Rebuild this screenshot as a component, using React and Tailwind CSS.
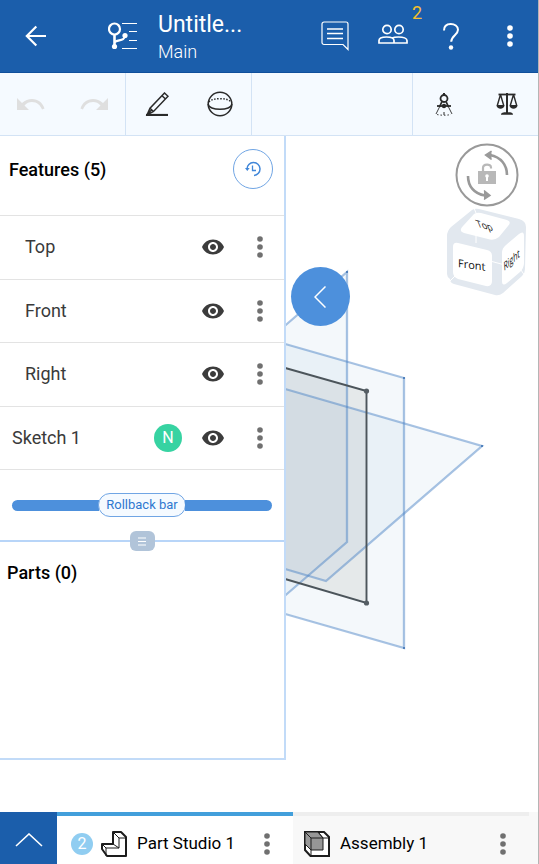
import React from "react";

function Dots({ className }) {
  return (
    <svg viewBox="0 0 8 24" className={className} fill="currentColor" aria-hidden="true">
      <circle cx="4" cy="4" r="2.8" />
      <circle cx="4" cy="12" r="2.8" />
      <circle cx="4" cy="20" r="2.8" />
    </svg>
  );
}

function Eye() {
  return (
    <svg viewBox="0 0 24 24" className="size-6" fill="#3c3c3c" aria-hidden="true">
      <path d="M12 4.500C7 4.500 2.730 7.610 1 12c1.730 4.390 6 7.500 11 7.500s9.270-3.110 11-7.500c-1.730-4.390-6-7.500-11-7.500zM12 17c-2.760 0-5-2.240-5-5s2.240-5 5-5 5 2.240 5 5-2.240 5-5 5zm0-8c-1.660 0-3 1.340-3 3s1.340 3 3 3 3-1.340 3-3-1.340-3-3-3z" />
    </svg>
  );
}

function Header() {
  return (
    <header className="flex h-[73px] shrink-0 border-b border-[#0f4f9b] bg-[#1b5eab] text-white">
      <button aria-label="Back" className="flex w-[72px] items-center justify-center">
        <svg viewBox="0 0 24 24" className="size-6" fill="none" stroke="currentColor" strokeWidth="2.200" aria-hidden="true">
          <path d="M22 12H3.500M12.300 2.400 2.800 12l9.500 9.600" />
        </svg>
      </button>
      <div className="flex min-w-0 flex-1 items-center gap-5 pl-9">
        <svg viewBox="0 0 30 28" className="h-7 w-[30px] shrink-0" fill="none" stroke="currentColor" aria-hidden="true">
          <circle cx="6.500" cy="7" r="5.500" strokeWidth="2.200" />
          <path d="M6.500 12.500v12" strokeWidth="2.600" />
          <path d="M6.500 20c4.500-2.500 10-1 10.500-6.500" strokeWidth="2.200" />
          <circle cx="6.500" cy="24.500" r="2.600" fill="currentColor" stroke="none" />
          <circle cx="17" cy="13.500" r="2.600" fill="currentColor" stroke="none" />
          <path d="M14 1.500h15M21 9.500h8M21 18.500h8M14 26.500h15" strokeWidth="1.200" />
        </svg>
        <div className="min-w-0 pt-1">
          <h1 className="text-[23px] leading-7 whitespace-nowrap">Untitle...</h1>
          <p className="text-lg leading-[26px] font-light">Main</p>
        </div>
      </div>
      <div className="flex shrink-0">
        <button aria-label="Comments" className="flex w-[58px] items-center justify-center">
          <svg viewBox="0 0 28 30" className="h-[30px] w-7" fill="none" stroke="currentColor" strokeWidth="1.200" aria-hidden="true">
            <path d="M3 1h22a2 2 0 0 1 2 2v25.500l-5-5H3a2 2 0 0 1-2-2V3a2 2 0 0 1 2-2z" />
            <path d="M6 8h16M6 12.500h16M6 17.500h16" strokeWidth="1.500" />
          </svg>
        </button>
        <button aria-label="Share, 2 collaborators" className="relative flex w-[58px] items-center justify-center">
          <svg viewBox="0 0 30 20" className="mb-1 h-5 w-[30px]" fill="none" stroke="currentColor" strokeWidth="1.700" aria-hidden="true">
            <circle cx="9" cy="5.500" r="4.200" />
            <circle cx="21" cy="5.500" r="4.200" />
            <path d="M1 19v-2.500C1 14.500 4 13 8.500 13s7.500 1.500 7.500 3.500V19zM14 14c1.500-.7 4-1 6.500-1 5 0 8.500 1.500 8.500 3.500V19H16" />
          </svg>
          <span className="absolute top-px right-0 text-lg leading-6 text-[#f7c02c]">2</span>
        </button>
        <button aria-label="Help" className="flex w-[58px] items-center justify-center">
          <svg viewBox="0 0 18 28" className="h-7 w-[18px]" fill="none" stroke="currentColor" strokeWidth="2" aria-hidden="true">
            <path d="M2 8.500C2 4 4.800 2 8.700 2S16 4.200 16 7.800c0 5-6.800 6-6.800 12" />
            <circle cx="9" cy="25.500" r="2.200" fill="currentColor" stroke="none" />
          </svg>
        </button>
        <button aria-label="More options" className="flex w-[58px] items-center justify-center pl-0.5">
          <Dots className="h-6 w-2" />
        </button>
      </div>
    </header>
  );
}

function ToolButton({ label, disabled, children }) {
  return (
    <button aria-label={label} disabled={disabled} className="flex flex-1 items-center justify-center">
      {children}
    </button>
  );
}

function Toolbar() {
  return (
    <div role="toolbar" className="flex h-[63px] shrink-0 border-b border-[#d3e3f5] bg-[#f5faff] text-[#2a2a2a]">
      <div className="flex w-[126px] border-r border-[#d3e3f5]">
        <ToolButton label="Undo" disabled>
          <svg viewBox="0 0 28 14" className="h-3.5 w-7" fill="#dfdfdf" aria-hidden="true">
            <path d="M0 1v12h12L7.500 8.500C9.500 6 12 5 15 5c5 0 8.500 3.500 10 7.500l2.500-1C25.500 5.500 21 2 15 2 11.500 2 8 3.500 5 6z" />
          </svg>
        </ToolButton>
        <ToolButton label="Redo" disabled>
          <svg viewBox="0 0 28 14" className="h-3.5 w-7" fill="#dfdfdf" aria-hidden="true">
            <path d="M28 1v12H16l4.500-4.500C18.500 6 16 5 13 5c-5 0-8.500 3.500-10 7.500l-2.500-1C2.500 5.500 7 2 13 2c3.500 0 7 1.500 10 4z" />
          </svg>
        </ToolButton>
      </div>
      <div className="flex w-[126px] border-r border-[#d3e3f5]">
        <ToolButton label="Sketch">
          <svg viewBox="0 0 24 24" className="size-6" fill="none" stroke="currentColor" strokeWidth="1.500" aria-hidden="true">
            <path d="M19.500 1 23 4.300 8.500 19.500 2 23l3-6.800zM5 16.200l3.500 3.300M17 3.700l3.500 3.300M2 22.500l5-5" />
            <path d="M1 23h22" strokeWidth="2.200" />
          </svg>
        </ToolButton>
        <ToolButton label="View settings">
          <svg viewBox="0 0 26 26" className="size-[26px]" fill="none" stroke="currentColor" strokeWidth="1.500" aria-hidden="true">
            <circle cx="13" cy="13" r="11.800" />
            <path d="M1.200 13c0 7 23.600 7 23.600 0" />
            <path d="M2 11c3-4.500 19-4.500 22 0" strokeDasharray="1.500 1.500" />
          </svg>
        </ToolButton>
      </div>
      <div className="flex-1" />
      <div className="flex w-[126px] border-l border-[#d3e3f5]">
        <ToolButton label="Measure">
          <svg viewBox="0 0 18 24" className="h-6 w-[18px]" fill="none" stroke="currentColor" aria-hidden="true">
            <path d="M9 1v2.500" strokeWidth="2" />
            <circle cx="9" cy="6.500" r="3.500" strokeWidth="1.800" />
            <path d="M7 9.500 4.500 15M11 9.500l2.500 5.500" strokeWidth="1.800" />
            <path d="M2 14h14" strokeWidth="1.800" />
            <circle cx="9" cy="14" r="2.200" fill="currentColor" stroke="none" />
            <path d="M4.500 15 1 22M13.500 15l3.500 7" strokeWidth="0.900" />
            <path d="M2 22.500q7 1.500 14 0" strokeWidth="1" strokeDasharray="1.500 2" />
            <path d="M9 20v3" strokeWidth="1" />
          </svg>
        </ToolButton>
        <ToolButton label="Mass properties">
          <svg viewBox="0 0 22 24" className="h-6 w-[22px]" fill="none" stroke="currentColor" strokeWidth="1.400" aria-hidden="true">
            <path d="M2.500 2.500h17" strokeWidth="1.800" />
            <path d="M11 1v20" strokeWidth="2" />
            <path d="M4.500 2.500 1.300 13.500M4.500 2.500l3.200 11M17.500 2.500l-3.200 11M17.500 2.500l3.200 11" />
            <path d="M.5 13h8c0 5-8 5-8 0zM13.500 13h8c0 5-8 5-8 0zM5 22.800c0-2.300 2-2.500 6-2.500s6 .2 6 2.500z" fill="currentColor" stroke="none" />
          </svg>
        </ToolButton>
      </div>
    </div>
  );
}

function ModelView() {
  return (
    <svg
      viewBox="0 136 538 676"
      preserveAspectRatio="xMinYMin slice"
      className="absolute inset-0 size-full"
      role="img"
      aria-label="Default planes and Sketch 1"
    >
      <g fill="#4682b4" fillOpacity="0.060">
        <path d="M347 272 280 330v270l67-58z" />
        <path d="M404 378 280 342.500v270L404 648z" />
        <path d="M482 446 280 387.500v180L326 581z" />
      </g>
      <path d="M366 391 280 366.500v211L366 603z" fill="#80857c" fillOpacity="0.130" />
      <g fill="none" stroke="#4a82c4" strokeOpacity="0.480" strokeWidth="2.300">
        <path d="M280 330l67-58v270l-67 58" />
        <path d="M280 342.500 404 378v270l-124-35.500" />
        <path d="M280 387.500 482 446 326 581l-46-13.500" />
      </g>
      <g fill="#336bb0">
        <circle cx="347" cy="272" r="1" />
        <circle cx="404" cy="378" r="1" />
        <circle cx="404" cy="648" r="1" />
        <circle cx="482" cy="446" r="1" />
      </g>
      <path d="M280 366.500 366.500 391v212L280 577.500" fill="none" stroke="#4c555b" strokeWidth="1.900" />
      <circle cx="366.500" cy="391" r="2.600" fill="#555e64" />
      <circle cx="366.500" cy="603" r="2.600" fill="#555e64" />
    </svg>
  );
}

function RotateLock() {
  return (
    <button aria-label="Unlock rotation" className="size-16">
      <svg viewBox="0 0 64 64" className="size-16" fill="none" stroke="#999" aria-hidden="true">
        <circle cx="32" cy="32" r="30.500" fill="#fff" strokeWidth="2" />
        <path d="M35 12c11 2 17 10 17 20M13 33c0 10 6 18 17 19.500" strokeWidth="2.600" />
        <path d="M36.500 8 30.500 12l6 4.500M29 47.500l6 5-6 4" fill="#999" strokeWidth="1.500" />
        <path d="M28 29v-4c0-4.500 8-4.500 8-.5v1" stroke="#b8b8b8" strokeWidth="2.200" />
        <path d="M23 28h18v13H23z" fill="#b8b8b8" stroke="none" />
        <circle cx="32" cy="33" r="1.800" fill="#fff" stroke="none" />
        <path d="M31 33h2v5h-2z" fill="#fff" stroke="none" />
      </svg>
    </button>
  );
}

function ViewCube() {
  return (
    <svg
      viewBox="1 0 82 90"
      className="h-[90px] w-[82px] font-['Open_Sans','Noto_Sans',sans-serif] text-[11px]"
      role="img"
      aria-label="View cube"
    >
      <path
        d="M27 3q3-2 7-1l40 10q7 2 7 8l-1 42q0 4-3 7L58 86q-4 3-8 2L9 77q-4-1-4-5-3-2-3-5V29q0-5 4-9z"
        fill="#e2e8ef"
      />
      <path d="M29 1l2 5M31 22v14M47 54.500l11 3M4 75l6-6M80 69l-4-6" stroke="#fff" strokeWidth="1" />
      <path d="M29 7q3-2 7-1l26 7q5 2 1 6L54 30q-5 4-11 2L19 26q-6-2-1-7z" fill="#fff" />
      <path d="M13 36q-5-1-5 4v25q0 5 5 7l28 7q6 1 6-5V49q0-5-5-6z" fill="#fff" />
      <path d="M57 46q0-5 4-8l13-11q5-4 5 2v27q0 5-4 9L62 76q-5 4-5-2z" fill="#fff" />
      <text transform="translate(13 60) skewY(8)" fill="#111">Front</text>
      <text transform="translate(33 20) skewY(15) skewX(25)" className="text-[9px]" fill="#111">Top</text>
      <text transform="translate(59 64) rotate(-42) skewX(-38)" className="text-[9px]" fill="#111">Right</text>
    </svg>
  );
}

function FeatureRow({ name, user, indent }) {
  return (
    <li className="flex flex-1 items-center border-b border-[#e3e3e3] pr-5">
      <span className={"flex-1 text-lg text-[#3a3a3a] " + (indent ? "pl-[25px]" : "pl-3")}>{name}</span>
      {user && (
        <span className="mr-[19px] flex size-7 items-center justify-center rounded-full bg-[#37d3a2] text-base text-white">
          {user}
        </span>
      )}
      <button aria-label={"Hide " + name}>
        <Eye />
      </button>
      <button aria-label={name + " menu"} className="ml-[31px] text-[#707070]">
        <Dots className="h-6 w-2" />
      </button>
    </li>
  );
}

function FeaturePanel() {
  return (
    <aside className="relative flex h-[624px] w-[286px] flex-col border-r-2 border-b-2 border-[#c2dbf8] bg-white">
      <div className="flex h-20 items-start justify-between border-b border-[#e3e3e3] pt-[13px] pr-[11px] pl-[9px]">
        <h2 className="text-lg leading-[42px] font-medium text-black">Features (5)</h2>
        <button
          aria-label="History"
          className="flex size-10 items-center justify-center rounded-full border border-[#70a5e4]"
        >
          <svg viewBox="0 0 16 16" className="size-4" fill="none" stroke="#4187d9" strokeWidth="1.500" aria-hidden="true">
            <path d="M2 8a6.500 6.500 0 1 1 7 6.500" />
            <path d="M0 7h4.600L2.300 10z" fill="#4187d9" stroke="none" />
            <path d="M7.500 4.500v5H11" strokeWidth="1.300" />
          </svg>
        </button>
      </div>
      <ul className="flex h-[254px] flex-col">
        <FeatureRow name="Top" indent />
        <FeatureRow name="Front" indent />
        <FeatureRow name="Right" indent />
        <FeatureRow name="Sketch 1" user="N" />
      </ul>
      <div className="flex h-[70px] items-center px-3">
        <div className="h-[11px] flex-1 rounded-l-full bg-[#4d90dc]" />
        <button className="-mx-px h-6 rounded-full border border-[#70a5e4] bg-[#f5faff] px-[7px] text-[13px] leading-5 text-[#2f78cf]">
          Rollback bar
        </button>
        <div className="h-[11px] flex-1 rounded-r-full bg-[#4d90dc]" />
      </div>
      <div className="flex h-0.5 items-center justify-center bg-[#b8d5f8]">
        <button aria-label="Resize panels" className="flex h-5 w-[25px] shrink-0 items-center justify-center rounded-md bg-[#b1c4d9]">
          <svg viewBox="0 0 8 9" className="h-[9px] w-2" stroke="#fff" strokeWidth="1.200" aria-hidden="true">
            <path d="M0 1h8M0 4.500h8M0 8h8" />
          </svg>
        </button>
      </div>
      <h2 className="pt-[17px] pl-[7px] text-lg leading-7 font-medium text-black">Parts (0)</h2>
    </aside>
  );
}

function Workspace() {
  return (
    <main className="relative flex flex-1 items-start justify-between overflow-hidden bg-white">
      <ModelView />
      <FeaturePanel />
      <button
        aria-label="Collapse panel"
        className="absolute top-[131px] left-[291px] flex size-[59px] items-center justify-center rounded-full bg-[#4d90dc] pr-0.5"
      >
        <svg viewBox="0 0 12 22" className="h-[22px] w-3" fill="none" stroke="#fff" strokeWidth="1.500" aria-hidden="true">
          <path d="M11.500.5 1 11l10.500 10.500" />
        </svg>
      </button>
      <div className="relative flex flex-col items-center pt-[7px] pr-2.5">
        <RotateLock />
        <ViewCube />
      </div>
    </main>
  );
}

function PartIcon() {
  return (
    <svg viewBox="0 0 28 28" className="size-7" fill="#fff" stroke="#1d1d1d" strokeLinejoin="round" aria-hidden="true">
      <path d="M13 2h8l5 5v19H7l-5-7v-5h11z" strokeWidth="2" />
      <path d="M13 2l6 6h7M19 8v10H6v8M2 14l4 4" fill="none" strokeWidth="1" />
      <path d="M13 14l6 4" fill="none" strokeWidth="1" />
    </svg>
  );
}

function AssemblyIcon() {
  return (
    <svg viewBox="0 0 28 28" className="size-7" fill="#fff" stroke="#1d1d1d" aria-hidden="true">
      <path d="M2 2h19l5 5v19H7.500L2 20z" strokeWidth="2" />
      <path d="M2 2h13l5 6v12H8L2 14z" fill="#979797" strokeWidth="1" />
      <path d="M2 2l6 6h18M8 8v18M20 8l-5-6" fill="none" strokeWidth="1" />
    </svg>
  );
}

function TabBar() {
  return (
    <nav className="grid h-[52px] shrink-0 grid-cols-[57px_1fr_1fr_9px] bg-[#f8f8f8] text-[17px] text-black">
      <button aria-label="Show tabs" className="flex items-center justify-center bg-[#1b5eab]">
        <svg viewBox="0 0 28 14" className="mt-1 h-3.5 w-7" fill="none" stroke="#fff" strokeWidth="1.600" aria-hidden="true">
          <path d="M1 13 14 1l13 12" />
        </svg>
      </button>
      <div className="flex items-center border-t-4 border-[#429fdb] bg-white pt-2 pr-[22px] pl-3.5">
        <span className="flex size-[22px] shrink-0 items-center justify-center rounded-full bg-[#90cdf1] text-base text-white">2</span>
        <button className="ml-[7px] flex flex-1 items-center gap-[9px] text-left whitespace-nowrap">
          <PartIcon />
          Part Studio 1
        </button>
        <button aria-label="Part Studio 1 menu" className="text-[#707070]">
          <Dots className="h-6 w-2" />
        </button>
      </div>
      <div className="flex items-center border-t-4 border-[#eee] pt-2 pr-[22px] pl-2.5">
        <button className="flex flex-1 items-center gap-[9px] text-left whitespace-nowrap">
          <AssemblyIcon />
          Assembly 1
        </button>
        <button aria-label="Assembly 1 menu" className="text-[#707070]">
          <Dots className="h-6 w-2" />
        </button>
      </div>
    </nav>
  );
}

export default function App() {
  return (
    <div className="flex h-screen min-h-[812px] flex-col border-r border-[#b5b5b5] bg-white font-[Roboto,sans-serif]">
      <Header />
      <Toolbar />
      <Workspace />
      <TabBar />
    </div>
  );
}
